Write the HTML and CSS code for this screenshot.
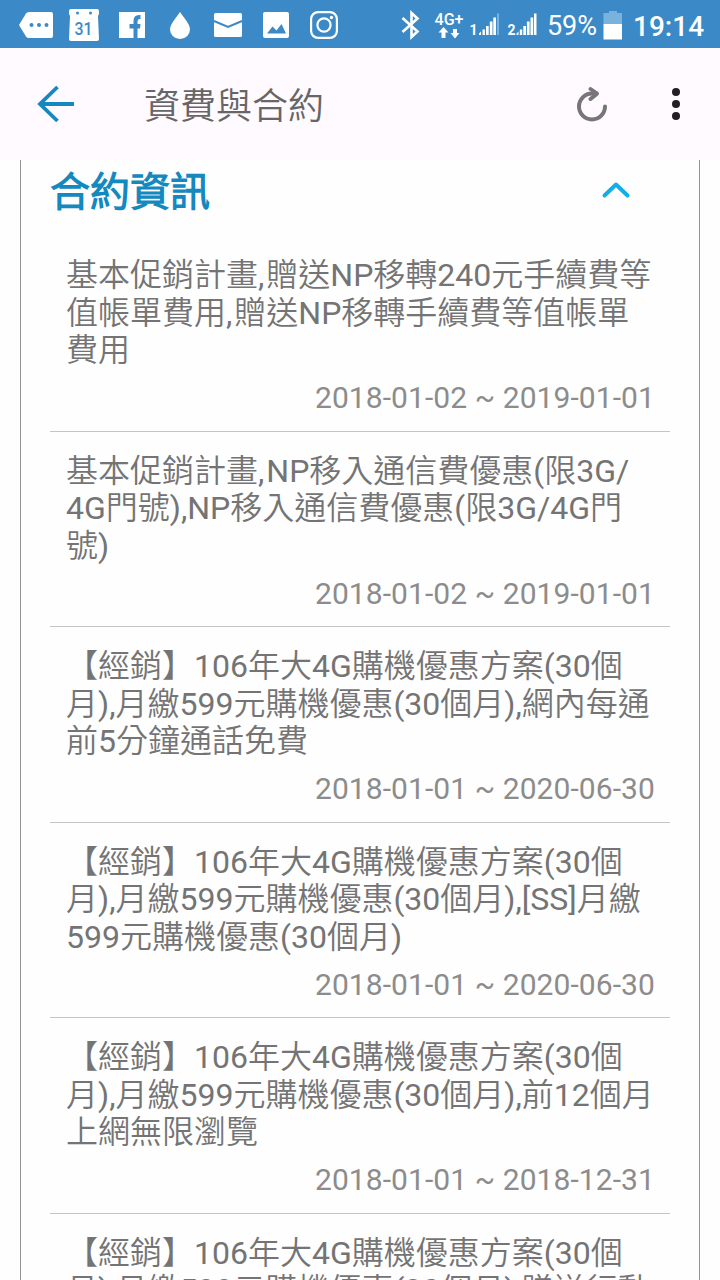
FILE: index.html
```
<!DOCTYPE html>
<html lang="zh-Hant">
<head>
<meta charset="utf-8">
<title>資費與合約</title>
<link rel="stylesheet" href="styles.css">
</head>
<body>
<div class="screen">
  <header class="status">
    <svg class="notifications" width="345" height="48" viewBox="0 0 345 48">
      <path fill="#fff" d="M19 25 26 13.500q1-1.500 3-1.500h22q2 0 2 2v22q0 2-2 2H29q-2 0-3-1.500z"/>
      <g fill="#3b8ac7"><circle cx="31.500" cy="25" r="2"/><circle cx="39" cy="25" r="2"/><circle cx="46.500" cy="25" r="2"/></g>
      <path fill="#fff" d="M71 9h26q2 0 2 2v3l-1 2 1 23q0 2-2 2H71q-2 0-2-2l1-23-1-2v-3q0-2 2-2z"/>
      <circle cx="77.500" cy="13" r="1.500" fill="#3b8ac7"/><circle cx="90.500" cy="13" r="1.500" fill="#3b8ac7"/>
      <text class="calendar-day" x="83.500" y="34.500" text-anchor="middle" textLength="18" lengthAdjust="spacingAndGlyphs">31</text>
      <rect x="119" y="12" width="26" height="26" fill="#fff"/>
      <path fill="#3b8ac7" d="M133.500 38V28.500h-4V24h4v-3q0-6 5.500-6h1.500v4h-1q-2 0-2 2.500V24h3l-.5 4.500h-2.500V38z"/>
      <path fill="#fff" d="M180 12c4 6 10 12 10 17.500a10 9.500 0 0 1-20 0C170 24 176 18 180 12z"/>
      <rect x="214" y="13" width="28" height="24" rx="1.500" fill="#fff"/>
      <path fill="none" stroke="#3b8ac7" stroke-width="2" d="m214 21 14 6 14-6"/>
      <rect x="263" y="12" width="26" height="26" rx="2" fill="#fff"/>
      <path fill="#3b8ac7" d="m267 33.500 5.500-7 4 4 5-6.500 4.500 9.500z"/>
      <g fill="none" stroke="#fff" stroke-width="2.200"><rect x="311.100" y="12.100" width="25.800" height="25.800" rx="7"/><circle cx="324" cy="25" r="6.600"/></g>
      <circle cx="331.500" cy="17.500" r="1.700" fill="#fff"/>
    </svg>
    <svg class="signals" width="150" height="48" viewBox="395 0 150 48">
      <path fill="none" stroke="#fff" stroke-width="2.600" d="m402.500 18 15 13.500-6 5.500V13l6 5.500-15 13.500"/>
      <text class="network" x="434.500" y="25" textLength="29" lengthAdjust="spacingAndGlyphs">4G+</text>
      <path fill="#fff" d="m443.500 27 5 5.500h-3v5.500h-4v-5.500h-3zM455 38.500l-4.500-5.500h2.500v-4h4v4h2.500z"/>
      <text class="sim" x="469.500" y="34.800">1</text>
      <path fill="#fff" d="M479 33.500l2-2V35h-2zM482.500 29.500h2.400V35h-2.400zM486 26h2.700v9H486zM489.800 21.500h2.700V35h-2.700zM493.300 17.500h2.700V35h-2.700z"/>
      <path fill="#79b3dd" d="M497 13.500h2V35h-2z"/>
      <text class="sim" x="507.500" y="34.800" textLength="8" lengthAdjust="spacingAndGlyphs">2</text>
      <path fill="#fff" d="M516.500 33.500l2-2V35h-2zM519.800 29.500h2.400V35h-2.400zM523.300 26h2.700v9h-2.700zM526.900 21.500h2.700V35h-2.700zM530.500 17.500h2.700V35h-2.700zM534 13.500h2.500V35H534z"/>
    </svg>
    <span class="percent">59%</span>
    <svg class="battery" width="20" height="48" viewBox="0 0 20 48">
      <path fill="#79b3dd" d="M6 11h8v2h5v11H.5V13H6z"/><path fill="#fff" d="M.5 24H19v15.500H.5z"/>
    </svg>
    <span class="clock">19:14</span>
  </header>

  <nav class="toolbar">
    <svg class="back" width="40" height="40" viewBox="0 0 40 40"><path fill="none" stroke="#1688c0" stroke-width="3.800" d="M38 20H4M21.500 3 4 20l17.500 17"/></svg>
    <h1 class="title">資費與合約</h1>
    <svg class="reload" width="34" height="40" viewBox="0 0 34 40"><g fill="none" stroke="#767676" stroke-width="4" stroke-linecap="round" stroke-linejoin="round"><path d="M30 22.500A13 13 0 1 1 17 9.500h4"/><path d="m15.500 5 6.500 4.700-6.500 5.300"/></g></svg>
    <svg class="more" width="10" height="36" viewBox="0 0 10 36"><g fill="#202020"><circle cx="5" cy="6" r="4"/><circle cx="5" cy="18" r="4"/><circle cx="5" cy="30" r="4"/></g></svg>
  </nav>

  <main class="panel">
    <div class="section-head">
      <h2 class="section-title">合約資訊</h2>
      <svg width="30" height="20" viewBox="0 0 30 20"><path fill="none" stroke="#12aee9" stroke-width="4" stroke-linecap="round" stroke-linejoin="round" d="m3.500 15.500 11.500-11 11.500 11"/></svg>
    </div>
    <article class="contract">
      <p class="plan">基本促銷計畫<span class="comma">,</span>贈送NP移轉240元手續費等<br>值帳單費用<span class="comma">,</span>贈送NP移轉手續費等值帳單<br>費用</p>
      <p class="period">2018-01-02 ~ 2019-01-01</p>
    </article>
    <article class="contract">
      <p class="plan">基本促銷計畫<span class="comma">,</span>NP移入通信費優惠(限3G/<br>4G門號),NP移入通信費優惠(限3G/4G門<br>號)</p>
      <p class="period">2018-01-02 ~ 2019-01-01</p>
    </article>
    <article class="contract">
      <p class="plan">【經銷】106年大4G購機優惠方案(30個<br>月),月繳599元購機優惠(30個月),網內每通<br>前5分鐘通話免費</p>
      <p class="period">2018-01-01 ~ 2020-06-30</p>
    </article>
    <article class="contract">
      <p class="plan">【經銷】106年大4G購機優惠方案(30個<br>月),月繳599元購機優惠(30個月),[SS]月繳<br>599元購機優惠(30個月)</p>
      <p class="period">2018-01-01 ~ 2020-06-30</p>
    </article>
    <article class="contract">
      <p class="plan">【經銷】106年大4G購機優惠方案(30個<br>月),月繳599元購機優惠(30個月),前12個月<br>上網無限瀏覽</p>
      <p class="period">2018-01-01 ~ 2018-12-31</p>
    </article>
    <article class="contract">
      <p class="plan">【經銷】106年大4G購機優惠方案(30個<br>月),月繳599元購機優惠(30個月),贈送行動</p>
    </article>
  </main>
</div>
</body>
</html>
```
FILE: styles.css
```
* { box-sizing: border-box; margin: 0; }
body { font-family: Roboto, "Noto Sans CJK TC DemiLight", "Noto Sans CJK TC", sans-serif; background: #fefefe; }
svg { display: block; flex: none; }
.screen { width: 720px; height: 1280px; overflow: hidden; display: flex; flex-direction: column; }

.status { flex: none; height: 48px; display: flex; align-items: center; background: #3b8ac7; color: #fff; }
.signals { margin-left: 50px; }
.percent { width: 58px; padding: 5px 0 0 2px; font-size: 27px; line-height: 33px; white-space: nowrap; font-weight: 400; letter-spacing: -.1px; }
.clock { margin-left: 10px; padding-top: 4px; font-size: 28px; line-height: 33px; font-weight: 500; }
.calendar-day { font-size: 18px; font-weight: 500; fill: #3b8ac7; }
.network { font-size: 17px; font-weight: 500; fill: #fff; }
.sim { font-size: 14px; font-weight: 700; fill: #fff; }

.toolbar { flex: none; height: 112px; display: flex; align-items: center; padding: 0 39px 0 36px; background: #fefaff; }
.title { flex: 1; margin-left: 68px; padding-top: 5px; font-size: 36px; line-height: 48px; font-weight: 350; color: #666; }
.more { margin-left: 62px; }

.panel { flex: 1; min-height: 0; overflow: hidden; margin: 0 20px; padding: 0 29px; border: solid #929292; border-width: 0 1px; }
.section-head { height: 76px; display: flex; align-items: flex-start; justify-content: space-between; padding: 6px 39px 0 0; }
.section-head svg { margin-top: 14px; }
.section-title { font-size: 40px; line-height: 54px; font-weight: 700; color: #1389c0; }

.contract { height: 195.5px; padding: 21px 15px 0 16px; border-bottom: 1px solid #c4c4c4; }
.plan { font-size: 32px; line-height: 37.5px; white-space: nowrap; color: #747474; }
.comma { letter-spacing: 2px; }
.period { margin-top: 10.5px; font-size: 30px; line-height: 35px; text-align: right; letter-spacing: .08px; color: #8c8c8c; }
```
